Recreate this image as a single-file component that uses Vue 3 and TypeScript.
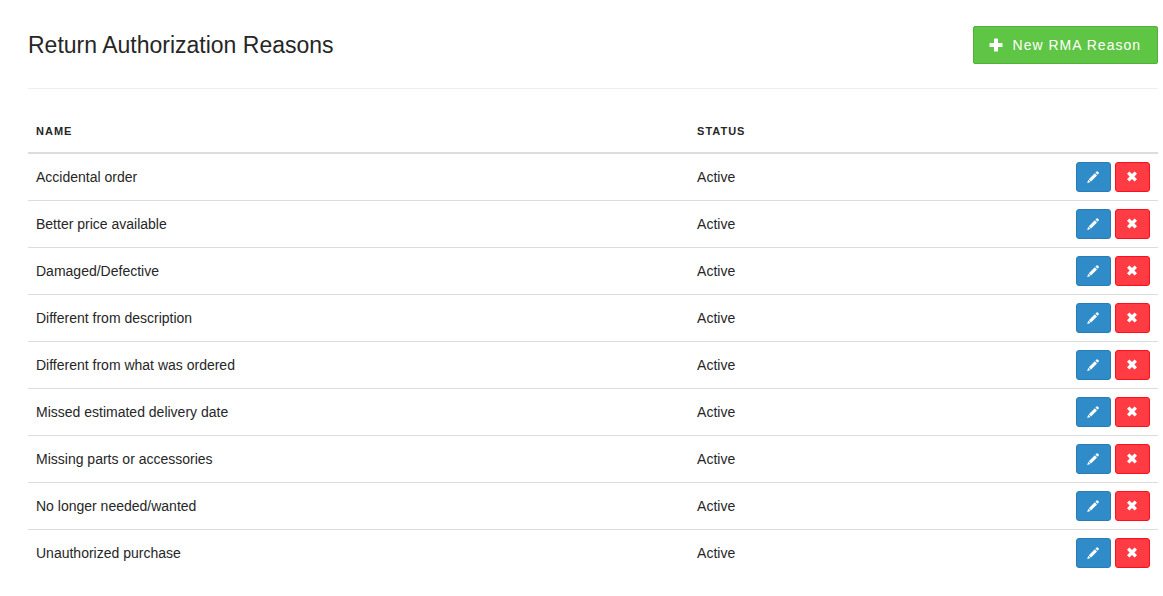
<script setup lang="ts">
interface Reason {
  name: string
  active: boolean
}

const reasons: Reason[] = [
  'Accidental order',
  'Better price available',
  'Damaged/Defective',
  'Different from description',
  'Different from what was ordered',
  'Missed estimated delivery date',
  'Missing parts or accessories',
  'No longer needed/wanted',
  'Unauthorized purchase',
].map((name) => ({ name, active: true }))
</script>

<template>
  <main class="page">
    <header class="page-header">
      <h1>Return Authorization Reasons</h1>
      <button type="button" class="btn btn-new">
        <svg width="14" height="14" viewBox="0 0 14 14" aria-hidden="true">
          <path d="M5.5 .5h3q.5 0 .5.5v4h4q.5 0 .5.5v3q0 .5-.5.5H9v4q0 .5-.5.5h-3q-.5 0-.5-.5V9H1q-.5 0-.5-.5v-3Q.5 5 1 5h4V1q0-.5.5-.5z" />
        </svg>
        <span>New RMA Reason</span>
      </button>
    </header>

    <table class="reasons">
      <colgroup>
        <col class="col-name" />
        <col class="col-status" />
        <col class="col-actions" />
      </colgroup>
      <thead>
        <tr>
          <th scope="col">Name</th>
          <th scope="col">Status</th>
          <td></td>
        </tr>
      </thead>
      <tbody>
        <tr v-for="reason in reasons" :key="reason.name">
          <td>{{ reason.name }}</td>
          <td>{{ reason.active ? 'Active' : 'Inactive' }}</td>
          <td>
            <div class="actions">
              <button type="button" class="btn btn-icon btn-edit" :aria-label="`Edit ${reason.name}`">
                <svg width="13" height="12" viewBox="0 0 13 12" aria-hidden="true">
                  <path d="M.2 12l1-3.3 2.3 2.3zM1.8 8.2l6-6 2.2 2.2-6 6zM8.4 1.6l1.2-1.2q.6-.5 1.1 0l1 1q.5.6 0 1.1L10.6 3.8z" />
                </svg>
              </button>
              <button type="button" class="btn btn-icon btn-delete" :aria-label="`Delete ${reason.name}`">
                <svg width="11" height="12" viewBox="0 0 11 12" aria-hidden="true">
                  <path d="M2.4 .4L5 3 7.6 .4 10 2.8 7.4 5.5 10 8.2 7.6 10.6 5 8 2.4 10.6 0 8.2 2.6 5.5 0 2.8z" />
                </svg>
              </button>
            </div>
          </td>
        </tr>
      </tbody>
    </table>
  </main>
</template>

<style>
body {
  margin: 0;
  background: #fff;
}
</style>

<style scoped>
.page {
  padding: 26px 5px 18px 28px;
  color: #262626;
  font-family: 'Helvetica Neue', Helvetica, 'Liberation Sans', Arial, sans-serif;
  font-size: 14px;
  line-height: 20px;
}

.page-header {
  display: flex;
  align-items: center;
  justify-content: space-between;
  padding-bottom: 24px;
  border-bottom: 1px solid #eee;
}

h1 {
  margin: 0;
  font-size: 23px;
  line-height: 28px;
  font-weight: 300;
}

.btn {
  display: inline-flex;
  align-items: center;
  justify-content: center;
  box-sizing: border-box;
  margin: 0;
  border: 1px solid;
  border-radius: 3px;
  color: #fff;
  font: inherit;
  cursor: pointer;
}

.btn svg {
  display: block;
  fill: currentColor;
}

.btn-new {
  gap: 10px;
  height: 38px;
  padding: 0 16px 0 15px;
  border-color: #50b037;
  border-radius: 2px;
  background: #5fc544;
  letter-spacing: 1px;
}

.reasons {
  width: 100%;
  margin-top: 20px;
  border-collapse: separate;
  border-spacing: 0;
  table-layout: fixed;
}

.col-name {
  width: 58.5%;
}

.col-status {
  width: 33%;
}

.reasons thead th,
.reasons thead td {
  height: 43px;
  padding: 0 8px;
  border-bottom: 2px solid #ddd;
  font-size: 11px;
  font-weight: 700;
  letter-spacing: 1px;
  text-align: left;
  text-transform: uppercase;
}

.reasons tbody td {
  padding: 8px;
  border-bottom: 1px solid #ddd;
}

.reasons tbody tr:last-child td {
  border-bottom: 0;
}

.actions {
  display: flex;
  justify-content: flex-end;
  gap: 4px;
}

.btn-icon {
  width: 35px;
  height: 30px;
  padding: 0;
}

.btn-edit {
  border-color: #2a7cb5;
  background: #308bc9;
}

.btn-delete {
  border-color: #ff0f1b;
  background: #ff3b43;
}
</style>
